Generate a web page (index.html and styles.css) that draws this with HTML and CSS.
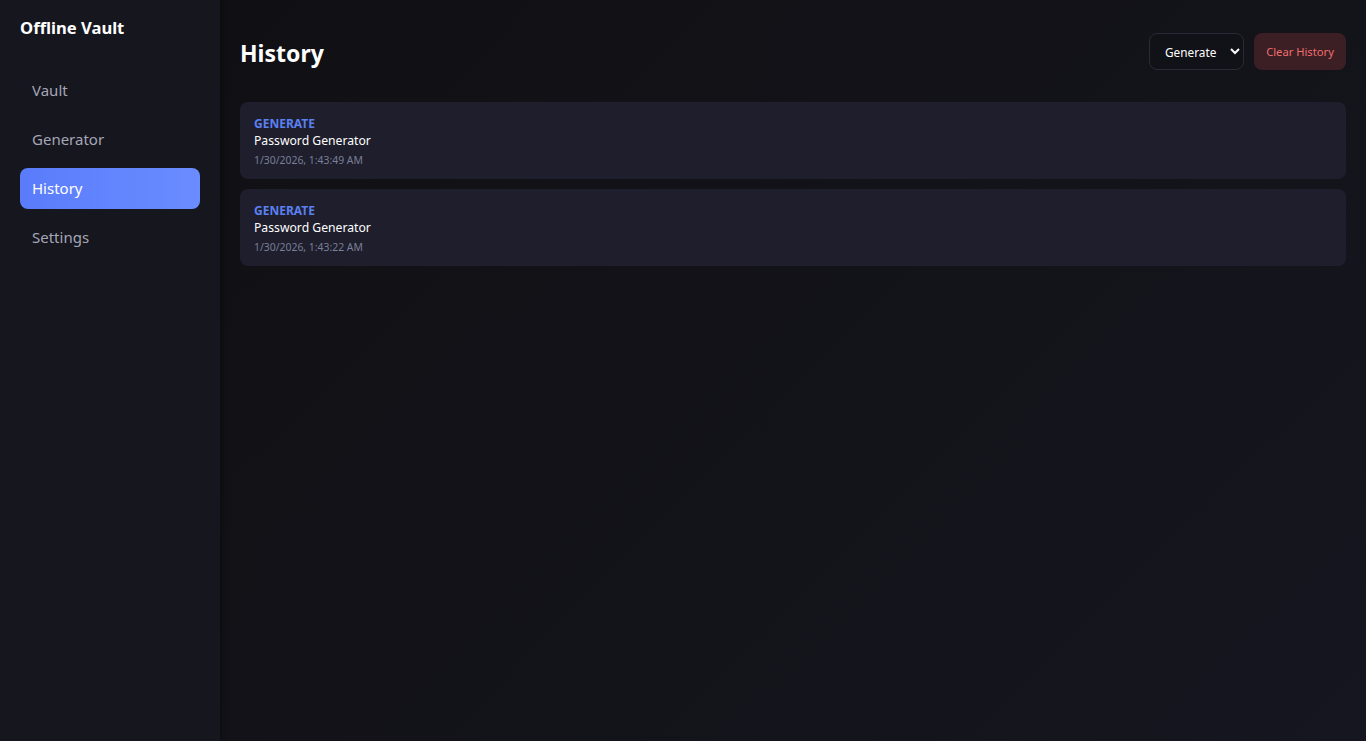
FILE: index.html
```html
<!DOCTYPE html>
<html lang="en">
<head>
  <meta charset="UTF-8">
  <title>Offline Vault</title>
  <link rel="stylesheet" href="styles.css">
</head>
<body>
  <div class="app">
    <aside class="sidebar">
      <div class="brand">Offline Vault</div>
      <nav class="nav">
        <a class="nav-item" href="#">Vault</a>
        <a class="nav-item" href="#">Generator</a>
        <a class="nav-item active" href="#">History</a>
        <a class="nav-item" href="#">Settings</a>
      </nav>
    </aside>

    <main class="main">
      <div class="page-header">
        <h1>History</h1>
        <div class="header-actions">
          <select class="filter">
            <option>Generate</option>
          </select>
          <button class="btn-danger">Clear History</button>
        </div>
      </div>

      <div class="history-list">
        <div class="history-item">
          <div class="history-type">GENERATE</div>
          <div class="history-title">Password Generator</div>
          <div class="history-time">1/30/2026, 1:43:49 AM</div>
        </div>
        <div class="history-item">
          <div class="history-type">GENERATE</div>
          <div class="history-title">Password Generator</div>
          <div class="history-time">1/30/2026, 1:43:22 AM</div>
        </div>
      </div>
    </main>
  </div>
</body>
</html>
```

FILE: styles.css
```css
* {
  box-sizing: border-box;
}

body {
  margin: 0;
  font-family: "Noto Sans", "Open Sans", sans-serif;
  background-color: #111116;
  color: #ffffff;
}

.app {
  display: flex;
  height: 100vh;
}

.sidebar {
  width: 220px;
  flex-shrink: 0;
  background-color: #16161f;
  box-shadow: 2px 0 6px rgba(0, 0, 0, 0.35);
  padding: 16px 20px;
  position: relative;
  z-index: 1;
}

.brand {
  font-size: 16.6px;
  font-weight: bold;
  line-height: 24px;
  margin-bottom: 30px;
}

.nav {
  display: flex;
  flex-direction: column;
  gap: 8px;
}

.nav-item {
  display: block;
  height: 41px;
  line-height: 41px;
  padding: 0 12px;
  border-radius: 8px;
  color: #a6a6b6;
  font-size: 15px;
  text-decoration: none;
}

.nav-item.active {
  background: linear-gradient(90deg, #5a7cfb, #6a8cff);
  color: #ffffff;
}

.main {
  flex: 1;
  padding: 33px 20px 20px;
  background: linear-gradient(135deg, #101014 0%, #13131a 60%, #161620 100%);
}

.page-header {
  display: flex;
  align-items: center;
  justify-content: space-between;
  height: 37px;
  margin-bottom: 32px;
}

.page-header h1 {
  margin: 0 0 -2px;
  font-size: 23px;
  font-weight: bold;
}

.header-actions {
  display: flex;
  gap: 10px;
}

.filter {
  height: 37px;
  width: 95px;
  padding: 0 2px 0 11px;
  background-color: #111118;
  color: #ffffff;
  border: 1px solid #2a2a36;
  border-radius: 8px;
  font-family: inherit;
  font-size: 11.8px;
}

.btn-danger {
  height: 37px;
  width: 92px;
  padding: 0;
  background-color: #3b1f24;
  color: #f06d6d;
  border: none;
  border-radius: 8px;
  font-family: inherit;
  font-size: 11.2px;
  cursor: pointer;
}

.history-list {
  display: flex;
  flex-direction: column;
  gap: 10px;
}

.history-item {
  height: 77px;
  padding: 13px 14px;
  background-color: #1e1e2c;
  border-radius: 8px;
}

.history-type {
  font-size: 12px;
  font-weight: bold;
  color: #5b80f0;
  line-height: 17px;
}

.history-title {
  font-size: 12.2px;
  line-height: 17px;
}

.history-time {
  margin-top: 4px;
  font-size: 10.4px;
  color: #7a7e98;
  line-height: 15px;
}
```
